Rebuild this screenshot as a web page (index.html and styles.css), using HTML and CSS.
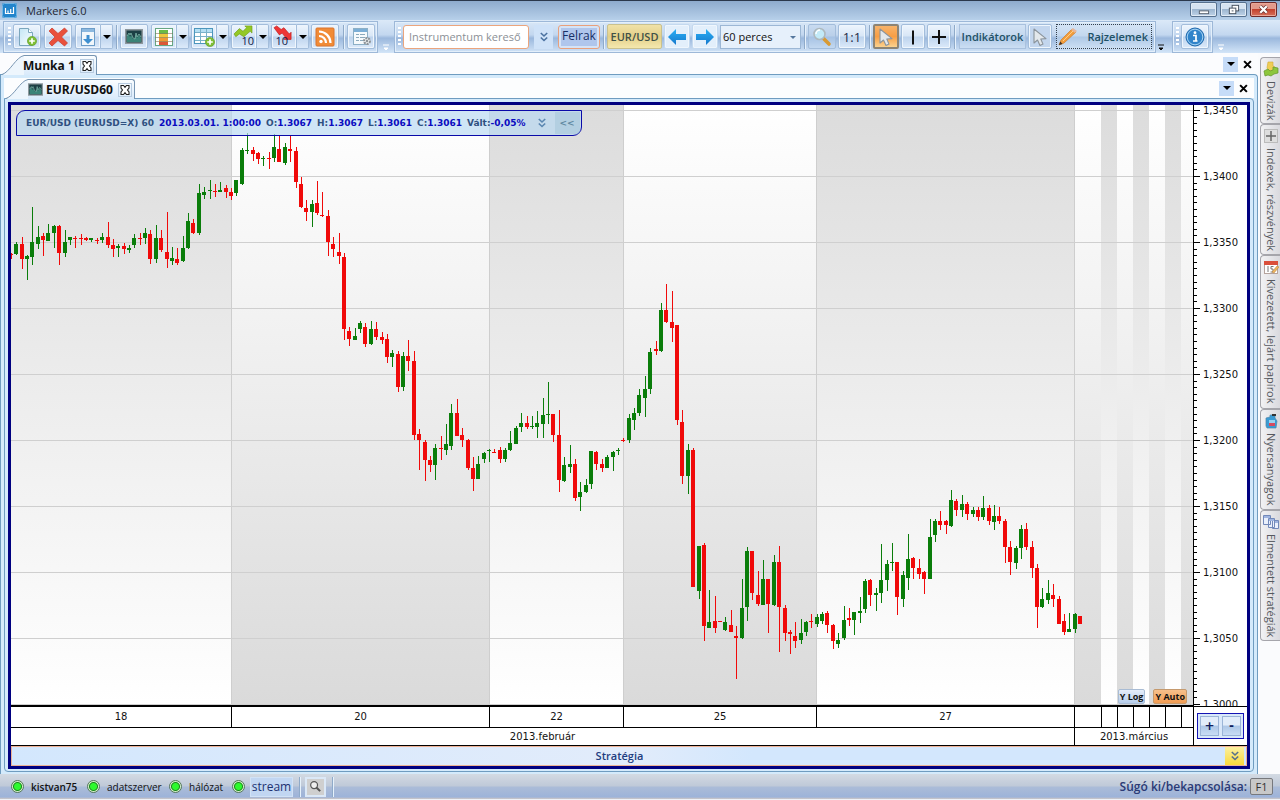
FILE: index.html
```html
<!DOCTYPE html>
<html lang="hu">
<head>
<meta charset="utf-8">
<title>Markers 6.0</title>
<link rel="stylesheet" href="styles.css">
</head>
<body>
<svg class="defs" aria-hidden="true">
  <defs>
    <linearGradient id="paper" x1="0" y1="0" x2="1" y2="1"><stop offset="0" stop-color="#c4e6f5"/><stop offset="1" stop-color="#fbfeff"/></linearGradient>
    <linearGradient id="arrowBlue" x1="0" y1="0" x2="0" y2="1"><stop offset="0" stop-color="#2ab0f5"/><stop offset="1" stop-color="#1678cc"/></linearGradient>
    <symbol id="plusBadge" viewBox="0 0 10 10"><circle cx="5" cy="5" r="4.6" fill="#7fbf35" stroke="#5f9a2c" stroke-width=".6"/><path d="M5 2.2v5.6M2.2 5h5.600" stroke="#fff" stroke-width="1.7"/></symbol>
    <symbol id="cursor" viewBox="0 0 16 18"><path d="M2 1v14l3.500-3 2.500 5.500 3-1.400L8.800 11l5.200-.4z" fill="#e3e8ec" stroke="#8b949c" stroke-width="1.1" stroke-linejoin="round"/></symbol>
    <symbol id="chev" viewBox="0 0 8 10"><path d="M.8 1L4 4l3.200-3M.8 5.500L4 8.500l3.200-3" fill="none" stroke="currentColor" stroke-width="1.6"/></symbol>
    <symbol id="monitor" viewBox="0 0 18 15"><path d="M0 0h18v15H0z" fill="#8d979c"/><path d="M1.500 1.500h15v12h-15z" fill="#1c3f44"/><path d="M2 13V7l2-2 1 3 1-2 2 4 2 0 1-5 1 4 2-3 2 3v4z" fill="#3b8377"/><path d="M2 7l2-3 1 2 1-2 2 5 2 1 1-6 1 4 2-3 2 3" fill="none" stroke="#8cc7b8" stroke-width=".7"/></symbol>
    <symbol id="closeTab" viewBox="0 0 12 12"><path d="M2 1.500h2.500L6 3.400 7.500 1.500H10v2.600L8.500 6 10 7.900v2.600H7.500L6 8.600 4.500 10.500H2V7.900L3.500 6 2 4.100z" fill="#fff" stroke="#222" stroke-width="1.1"/></symbol>
    <symbol id="overflow" viewBox="0 0 8 8"><path d="M1 1h6M2 4h4L4 6z" fill="currentColor" stroke="currentColor"/></symbol>
  </defs>
</svg>
<div class="app">
  <header class="titlebar">
    <svg class="logo" viewBox="0 0 15 15"><rect width="15" height="15" rx="2" fill="#2385cc"/><rect x=".5" y=".5" width="14" height="14" rx="2" fill="none" stroke="#72b7e5"/><path d="M3.500 5v5.500h8V4M6 10.500V7.500M8.700 10.500V6" fill="none" stroke="#fff" stroke-width="1.200"/></svg>
    <h1 class="app-name">Markers 6.0</h1>
    <div class="win-buttons">
      <button class="win-btn" aria-label="Kis méret"><svg viewBox="0 0 26 14"><rect x="8.500" y="8.500" width="10" height="3" fill="#fff" stroke="#555e6b"/></svg></button>
      <button class="win-btn" aria-label="Előző méret"><svg viewBox="0 0 26 14"><rect x="11.500" y="2.500" width="7" height="6" fill="#fff" stroke="#444e5b"/><rect x="8.500" y="5.500" width="7" height="6" fill="#fff" stroke="#444e5b"/><path d="M11 8.500h2" stroke="#444e5b"/></svg></button>
      <button class="win-btn win-close" aria-label="Bezárás"><svg viewBox="0 0 26 14"><path d="M9.500 3.500l7 7M16.500 3.500l-7 7" stroke="#633" stroke-width="4"/><path d="M9.500 3.500l7 7M16.500 3.500l-7 7" stroke="#fff" stroke-width="2.400"/></svg></button>
    </div>
  </header>

  <nav class="toolbar" aria-label="Eszköztár">
    <div class="group group-files">
      <span class="grip"></span>
      <button class="tool" aria-label="Új"><svg viewBox="0 0 22 20"><path d="M3.500 1.500h9l4 4v13h-13z" fill="url(#paper)" stroke="#7ba6bd"/><path d="M12.500 1.500v4h4" fill="#fff" stroke="#7ba6bd"/><use href="#plusBadge" x="11" y="9" width="10" height="10"/></svg></button>
      <button class="tool" aria-label="Törlés"><svg viewBox="0 0 22 20"><path d="M2 4l3-3 6 5.500L17.500 1l3 3-6 6 6 6-3 3-6.500-5.500L5 19l-3-3 6-6z" fill="#e9503c" stroke="#ca3929" stroke-width=".7"/></svg></button>
      <span class="split"><button class="tool" aria-label="Mentés"><svg viewBox="0 0 22 20"><rect x="4.500" y="1.500" width="13" height="17" fill="#f1f7fb" stroke="#6d9dc8"/><path d="M5 2h12v3H5z" fill="#8bb8df"/><path d="M9.500 8h3v4H16l-5 5-5-5h3.500z" fill="#3e8fd0"/></svg></button><button class="drop" aria-label="Mentés menü"></button></span>
      <span class="sep"></span>
      <button class="tool" aria-label="Grafikon"><svg viewBox="0 0 22 20"><use href="#monitor" x="2" y="2" width="18" height="15"/></svg></button>
      <span class="split"><button class="tool" aria-label="Árlista"><svg viewBox="0 0 22 20"><rect x="2.500" y="1.500" width="17" height="17" fill="#fff" stroke="#66a783"/><path d="M6 3h9v4H6z" fill="#6abb45"/><path d="M6 7h9v4H6z" fill="#f0c83c"/><path d="M6 11h9v4H6z" fill="#f09a35"/><path d="M6 15h9v3H6z" fill="#dc5737"/><path d="M2 6.500h18M2 10.500h18M2 14.500h18" stroke="#85755e" stroke-width=".6"/></svg></button><button class="drop" aria-label="Árlista menü"></button></span>
      <span class="split"><button class="tool" aria-label="Új táblázat"><svg viewBox="0 0 22 20"><rect x="1.500" y="1.500" width="18" height="15" fill="#fff" stroke="#4c96bc"/><path d="M2 2h17v3H2z" fill="#b4dff4"/><path d="M2 5.500h17M2 9.500h17M2 13.500h17M7.500 2v14M13.500 2v14" stroke="#79b1ca"/><use href="#plusBadge" x="12" y="10" width="10" height="10"/></svg></button><button class="drop" aria-label="Új táblázat menü"></button></span>
      <span class="split"><button class="tool tool-count" aria-label="Nyertesek 10"><svg viewBox="0 0 22 20"><path d="M1 10l6-6 4 3 4-4-2-2h8v8l-2-2-7 6-5-3-4 3z" fill="#94c825" stroke="#6e9b17" stroke-width=".7"/></svg><span>10</span></button><button class="drop" aria-label="Nyertesek menü"></button></span>
      <span class="split"><button class="tool tool-count lose" aria-label="Vesztesek 10"><svg viewBox="0 0 22 20"><path d="M1 3l3-2 5 4 3-2 6 7 2-2v8h-8l2-2-4-5-3 2z" fill="#ee3636" stroke="#bf1717" stroke-width=".7"/></svg><span>10</span></button><button class="drop" aria-label="Vesztesek menü"></button></span>
      <button class="tool" aria-label="Hírek"><svg viewBox="0 0 22 20"><rect x="2" y="1" width="18" height="18" rx="1" fill="#f18b36" stroke="#dc752c"/><circle cx="7" cy="14.500" r="1.700" fill="#fff"/><path d="M5 9a7 7 0 0 1 7 7M5 4.500A11.500 11.500 0 0 1 16.500 16" fill="none" stroke="#fff" stroke-width="2.200"/></svg></button>
      <span class="sep"></span>
      <button class="tool" aria-label="Beállítások"><svg viewBox="0 0 22 20"><rect x="3.500" y="1.500" width="14" height="16" fill="#f6fafc" stroke="#8cafc6"/><path d="M4 2h13v3H4z" fill="#7baed6"/><path d="M6 7.500h3m1 0h5M6 10.500h3m1 0h5M6 13.500h3m1 0h3" stroke="#8caabd"/><circle cx="17" cy="14" r="3" fill="#e7e9ea" stroke="#8d9398" stroke-width="2" stroke-dasharray="2 1"/><circle cx="17" cy="14" r="1.200" fill="#8d9398"/></svg></button>
    </div>
    <svg class="more"><use href="#overflow"/></svg>
    <div class="group group-main">
      <span class="grip"></span>
      <input class="search" type="text" placeholder="Instrumentum kereső" aria-label="Instrumentum kereső">
      <button class="expand" aria-label="Lenyit"><svg><use href="#chev"/></svg></button>
      <button class="add"><span>Felrak</span></button>
      <span class="sep"></span>
      <button class="pair">EUR/USD</button>
      <button class="tool tool-arrow" aria-label="Előző"><svg viewBox="0 0 22 20"><path d="M2 10l8-8v5h10v6H10v5z" fill="url(#arrowBlue)"/></svg></button>
      <button class="tool tool-arrow" aria-label="Következő"><svg viewBox="0 0 22 20"><path d="M20 10l-8-8v5H2v6h10v5z" fill="url(#arrowBlue)"/></svg></button>
      <span class="combo"><select aria-label="Időtáv"><option>60 perces</option></select></span>
      <span class="sep"></span>
      <button class="tool tool-zoom" aria-label="Nagyítás"><svg viewBox="0 0 22 20"><path d="M12 11l6 6" stroke="#d89a33" stroke-width="3.600" stroke-linecap="round"/><circle cx="8.500" cy="7" r="5.500" fill="#c2eaf8" stroke="#aeb8bd" stroke-width="1.600"/><path d="M5 7a4 4 0 0 1 4-4" stroke="#fff" stroke-width="1.500" fill="none"/></svg></button>
      <button class="tool tool-ratio">1:1</button>
      <span class="sep"></span>
      <button class="tool tool-on" aria-label="Mutató"><svg viewBox="0 0 22 20"><use href="#cursor" x="3" y="1" width="16" height="18"/></svg></button>
      <button class="tool tool-mark" aria-label="Függőleges vonal"><svg viewBox="0 0 22 20"><path d="M11 3.500v14" stroke="#111" stroke-width="2"/></svg></button>
      <button class="tool tool-mark" aria-label="Kereszt"><svg viewBox="0 0 22 20"><path d="M11 3v14M4 10h14" stroke="#111" stroke-width="2"/></svg></button>
      <span class="sep"></span>
      <button class="tool-text tool-ind">Indikátorok</button>
      <button class="tool tool-mark tool-pick" aria-label="Kijelölés"><svg viewBox="0 0 22 20"><use href="#cursor" x="3" y="1" width="16" height="18"/></svg></button>
      <button class="tool-text tool-draw"><svg viewBox="0 0 22 20"><path d="M2 18l2-5L15 2l4 3L7 16z" fill="#f29d3d" stroke="#cf7d26" stroke-width=".7"/><path d="M14 2.500L16 1l4 3-2 2z" fill="#e6b69c"/><path d="M2 18l1.300-3.500L5.500 17z" fill="#443428"/><path d="M6 14L16 4" stroke="#ffd086"/></svg>Rajzelemek</button>
    </div>
    <svg class="more more-dark"><use href="#overflow"/></svg>
    <div class="group group-info">
      <span class="grip"></span>
      <button class="tool" aria-label="Információ"><svg viewBox="0 0 22 20"><circle cx="11" cy="10" r="9" fill="#2f83ca" stroke="#246cae"/><circle cx="11" cy="10" r="7.800" fill="none" stroke="#a5d2f3"/><circle cx="11" cy="5.700" r="1.400" fill="#fff"/><path d="M9 8.500h3V14h1.500M9 14h4" fill="none" stroke="#fff" stroke-width="1.700"/></svg></button>
    </div>
    <svg class="more"><use href="#overflow"/></svg>
  </nav>

  <main class="workspace">
    <section class="desk">
      <div class="tabs tabs-outer">
        <div class="tab">
          <svg class="slant" viewBox="0 0 22 20" preserveAspectRatio="none"><path d="M0 20C8 17 14 3 22 .5V20z" fill="#eef6fd"/><path d="M0 19.500C8 17 14 2 22 .5" fill="none" stroke="#7795b2"/></svg>
          <div class="tab-body"><span>Munka 1</span><button class="tab-close" aria-label="Bezárás"><svg><use href="#closeTab"/></svg></button></div>
        </div>
        <div class="tab-tools"><button class="tab-list" aria-label="Lapok"></button><button class="tab-x" aria-label="Bezárás"><svg viewBox="0 0 8 8"><path d="M1 1l6 6M7 1L1 7" stroke="#000" stroke-width="1.800"/></svg></button></div>
      </div>
      <div class="frame">
        <div class="tabs tabs-inner">
          <div class="tab">
            <svg class="slant" viewBox="0 0 22 20" preserveAspectRatio="none"><path d="M0 20C8 17 14 3 22 .5V20z" fill="#eef6fd"/><path d="M0 19.500C8 17 14 2 22 .5" fill="none" stroke="#7795b2"/></svg>
            <div class="tab-body"><svg class="tab-icon"><use href="#monitor"/></svg><span>EUR/USD60</span><button class="tab-close" aria-label="Bezárás"><svg><use href="#closeTab"/></svg></button></div>
          </div>
          <div class="tab-tools"><button class="tab-list" aria-label="Lapok"></button><button class="tab-x" aria-label="Bezárás"><svg viewBox="0 0 8 8"><path d="M1 1l6 6M7 1L1 7" stroke="#000" stroke-width="1.800"/></svg></button></div>
        </div>
        <div class="frame-inner">
          <div class="chart">
            <div class="plot">
              <svg id="candles" viewBox="11 105 1182 600" preserveAspectRatio="none" role="img" aria-label="EUR/USD 60 perces gyertyadiagram"></svg>
              <div class="quote">
                <span class="lbl">EUR/USD (EURUSD=X) 60</span><b>2013.03.01. 1:00:00</b><span class="lbl">O:<b>1.3067</b></span><span class="lbl">H:<b>1.3067</b></span><span class="lbl">L:<b>1.3061</b></span><span class="lbl">C:<b>1.3061</b></span><span class="lbl">Vált:<b>-0,05%</b></span>
                <button class="quote-more" aria-label="Lenyit"><svg><use href="#chev"/></svg></button><button class="quote-fold">&lt;&lt;</button>
              </div>
              <div class="scale-buttons"><button class="scale-btn">Y Log</button><button class="scale-btn scale-on">Y Auto</button></div>
            </div>
            <div class="prices">
              <svg id="ticks" viewBox="0 105 8 600" preserveAspectRatio="none" aria-hidden="true"></svg>
              <ol class="price-list"><li>1,3450</li><li>1,3400</li><li>1,3350</li><li>1,3300</li><li>1,3250</li><li>1,3200</li><li>1,3150</li><li>1,3100</li><li>1,3050</li><li>1,3000</li></ol>
            </div>
            <div class="dates">
              <div class="days"><span>18</span><span>20</span><span>22</span><span>25</span><span>27</span><span></span><span></span><span></span><span></span><span></span><span></span><span></span></div>
              <div class="months"><span>2013.február</span><span>2013.március</span></div>
            </div>
            <div class="corner"><div class="zoomers"><button>+</button><button>-</button></div></div>
            <div class="strategy"><span>Stratégia</span><button aria-label="Stratégia lenyitása"><svg><use href="#chev"/></svg></button></div>
          </div>
        </div>
      </div>
    </section>
    <aside class="side">
      <button class="side-tab side-fx"><svg viewBox="0 0 16 16"><path d="M5 1h5v4l2 1v4H6L4 7z" fill="#efcd55" stroke="#d0aa32" stroke-width=".6"/><path d="M1 10l4-2 2 2 3-1V6l5 1v5l-4 1-3 2-3-1-3 1z" fill="#8dc63c" stroke="#62972b" stroke-width=".7"/></svg>Devizák</button>
      <button class="side-tab side-idx"><svg viewBox="0 0 16 16"><rect x="1.500" y="1.500" width="13" height="13" fill="#dedede" stroke="#bbb"/><path d="M8 3v10M3 8h10" stroke="#666" stroke-width="1.500"/></svg>Indexek, részvények</button>
      <button class="side-tab side-exp"><svg viewBox="0 0 16 16"><rect x="1.500" y="2.500" width="13" height="12" fill="#fff" stroke="#b5a39d"/><path d="M1 2h14v4H1z" fill="#da4f3b"/><path d="M5 7v6M10.500 7.500H8V10h2v3H7.500" stroke="#777" fill="none"/><path d="M9 13l5-6 2 1-5 6z" fill="#eeb65f" stroke="#b67d36" stroke-width=".5"/></svg>Kivezetett, lejárt papírok</button>
      <button class="side-tab side-raw"><svg viewBox="0 0 16 16"><path d="M3 5l4-1V2h5v3l2 3-1 7H4L3 13z" fill="#3a9bd4" stroke="#4d87ab" stroke-width=".7"/><path d="M9 1h4v2H9z" fill="#333"/><path d="M6 7h6v6H6z" fill="#9bd2ef"/><path d="M6 10h6v3H6z" fill="#d64b60"/></svg>Nyersanyagok</button>
      <button class="side-tab side-str"><svg viewBox="0 0 16 16"><path d="M.5 1.500h7v9h-7zM9.500 6.500h6v8h-6zM5.500 4.500h6v9h-6z" fill="#eaf0fc" stroke="#7289ba"/><path d="M1 2h6v2H1zM6 5h5v2H6zM12 7h3v2h-3z" fill="#9fb4e0"/></svg>Elmentett stratégiák</button>
    </aside>
  </main>

  <footer class="status">
    <span class="lamp lamp-user"><i></i>kistvan75</span>
    <span class="lamp lamp-data"><i></i>adatszerver</span>
    <span class="lamp lamp-net"><i></i>hálózat</span>
    <span class="lamp lamp-stream"><i></i><button>stream</button></span>
    <span class="sep"></span>
    <button class="find" aria-label="Keresés"><svg viewBox="0 0 14 14"><path d="M8 8l4 4" stroke="#555" stroke-width="2.200"/><circle cx="5.500" cy="5.500" r="3.700" fill="#eee" stroke="#555" stroke-width="1.300"/></svg></button>
    <span class="sep"></span>
    <span class="help">Súgó ki/bekapcsolása:</span><button class="key">F1</button>
  </footer>
</div>
<script src="chart.js"></script>
</body>
</html>
```
FILE: styles.css
```css
* { box-sizing: border-box; }
body { margin: 0; font: 12px/16px "Open Sans", "Noto Sans", sans-serif; color: #111; }
button, input, select { font: inherit; color: inherit; margin: 0; padding: 0; border: 0; background: none; }
.defs { position: absolute; width: 0; height: 0; }
.app { display: flex; flex-direction: column; min-height: 100vh; background: #fbfcfe; }

/* Title bar */
.titlebar { display: flex; align-items: center; gap: 9px; height: 20px; padding: 0 3px 0 2px; border-top: 1px solid #2b384c; background: linear-gradient(#8eabcd, #b7d0ea); }
.logo { width: 15px; height: 15px; }
.app-name { flex: 1; margin: 0; font-size: 11px; font-weight: 400; color: #1d2530; }
.win-buttons { display: flex; gap: 3px; align-self: flex-start; padding-top: 1px; }
.win-btn { width: 27px; height: 15px; border: 1px solid #56708e; border-radius: 2px; background: linear-gradient(#d6e3f1 45%, #9db6d0 50%, #bfd3e8); box-shadow: inset 0 0 0 1px #e1ebf5; }
.win-btn svg { display: block; width: 25px; height: 13px; }
.win-close { border-color: #6e2a2a; background: linear-gradient(#e39a8b 45%, #c4422e 50%, #d6705c); box-shadow: inset 0 0 0 1px #eaa798; }

/* Toolbar */
.toolbar { display: flex; align-items: center; height: 33px; padding: 0 3px; background: linear-gradient(#dbe9f8, #c3d7ef 45%, #9bb8dd 55%, #d3e5f8); }
.toolbar > *, .group > * { flex: none; }
.group { display: flex; align-items: center; gap: 2px; height: 32px; padding: 0 3px; border: 1px solid #9db8d8; box-shadow: inset 0 0 0 1px #e3effb; }
.group-files { padding: 0 1px 0 4px; }
.group-files > .tool { margin-right: 1px; }
.grip { width: 3px; height: 20px; background: repeating-linear-gradient(#fff 0 2px, transparent 2px 4px); }
.tool { display: flex; align-items: center; justify-content: center; position: relative; width: 28px; height: 25px; border: 1px solid #a3bddb; border-radius: 2px; background: linear-gradient(#eef5fd, #d8e6f6 48%, #bdd3ed 52%, #dceafa); box-shadow: inset 0 0 0 1px #eff6fd; }
.tool svg { flex: none; width: 22px; height: 20px; }
.split { display: flex; }
.split .tool { width: 26px; border-radius: 2px 0 0 2px; }
.split .drop { width: 12px; height: 25px; border: 1px solid #a3bddb; border-left: 0; border-radius: 0 2px 2px 0; background: linear-gradient(#eef5fd, #d8e6f6 48%, #bdd3ed 52%, #dceafa); display: flex; align-items: center; justify-content: center; }
.drop::before, .tab-list::before { content: ""; border: 4px solid transparent; border-top-color: #000; border-bottom: 0; }
.tool-count svg { position: absolute; left: 1px; top: 0; width: 20px; height: 18px; }
.tool-count span { position: absolute; right: 2px; bottom: 0; font-size: 11px; line-height: 14px; color: #101848; }
.tool-count.lose span { right: 8px; }
.sep { width: 1px; height: 24px; margin: 0 1px; background: #8faac9; box-shadow: 1px 0 #e6f1fb; }
.more { width: 8px; height: 8px; margin: 22px 4px 0; color: #fff; }
.more-dark { margin: 22px 7px 0 1px; color: #111; }
.search { width: 126px; height: 24px; padding: 0 5px; border: 1px solid #eba57d; border-radius: 3px; background: #fff; font-size: 11px; }
.search::placeholder { color: #8b9096; opacity: 1; }
.expand { display: grid; place-items: center; width: 19px; height: 24px; background: #cfe2f8; color: #4b72a0; margin: 0 3px; }
.expand svg, .quote-more svg, .strategy svg { width: 8px; height: 10px; }
.add { width: 42px; height: 24px; padding: 2px; border: 1px solid #e8a07c; border-radius: 3px; background: #d5e3f6; color: #182f66; }
.add span { display: block; height: 18px; background: #b0c6ec; }
.pair { width: 55px; height: 25px; border: 1px solid #c9c18e; border-radius: 2px; background: linear-gradient(#f0e2a8, #e3cf88 50%, #f4e8ae); font-weight: 600; font-size: 11px; color: #3f5148; white-space: nowrap; }
.tool-arrow { width: 26px; border-color: #c4d9ef; background: #e3effb; }
.combo { position: relative; width: 81px; height: 24px; border: 1px solid #9cb7d5; background: #e6f0fb; }
.combo select { display: block; width: 100%; height: 22px; padding-left: 2px; appearance: none; font-size: 11px; }
.combo::after { content: ""; position: absolute; right: 4px; top: 10px; border: 3px solid transparent; border-top-color: #56789e; border-bottom: 0; pointer-events: none; }
.tool-zoom { background: linear-gradient(#c9dbf0, #b9cfe9 48%, #a6c2e4 52%, #c2d8f0); box-shadow: none; }
.tool-ratio { font-size: 13px; color: #1e2c48; }
.tool-on { width: 26px; border: 2px solid #8c8475; background: linear-gradient(#f7b36a, #f79e45 50%, #fbd28f); box-shadow: none; }
.tool-mark { width: 24px; }
.tool-pick { background: #c3d6ee; }
.tool-text { display: flex; align-items: center; justify-content: center; height: 25px; padding: 0; border: 1px solid #a9c1de; background: linear-gradient(#d3e3f5, #c3d7ee 48%, #aec8e6 52%, #cbdef3); font-size: 11px; font-weight: 600; color: #1e5166; white-space: nowrap; }
.tool-ind { width: 67px; margin-left: 1px; }
.tool-draw { width: 96px; margin-left: 2px; justify-content: space-between; padding-right: 3px; border: 1px dotted #33404d; }
.tool-draw svg { width: 22px; height: 20px; }

/* Workspace and tabs */
.workspace { display: flex; flex: 1; min-height: 0; }
.desk { display: flex; flex-direction: column; flex: 1; min-width: 0; }
.tabs { display: flex; align-items: flex-end; justify-content: space-between; }
.tabs-outer { height: 21px; padding: 0 6px 0 2px; }
.tabs-inner { height: 20px; padding: 0 6px 0 2px; background: #fcfdfe; }
.tab { display: flex; height: 20px; margin-bottom: -1px; position: relative; z-index: 1; }
.slant { width: 22px; height: 20px; }
.tab-body { display: flex; align-items: center; height: 20px; gap: 5px; padding-right: 2px; border-top: 1px solid #7795b2; border-right: 1px solid #7795b2; border-radius: 0 3px 0 0; background: linear-gradient(#fafdff, #d9eafb); font-weight: 700; }
.tab-body span { margin-left: -1px; }
.tab-icon { width: 15px; height: 13px; margin-right: -1px; }
.tab-close { width: 14px; height: 14px; border: 1px solid #b7cbe0; display: grid; place-items: center; }
.tab-close svg { width: 12px; height: 12px; }
.tab-tools { display: flex; align-items: center; gap: 4px; height: 20px; }
.tab-list { display: grid; place-items: center; width: 15px; height: 15px; background: #c6dcf8; }
.tab-x { display: grid; place-items: center; width: 10px; height: 14px; }
.tab-x svg { width: 9px; height: 9px; }
.frame { display: flex; flex-direction: column; flex: 1; padding: 3px 3px 2px; border: 1px solid #6f9cc0; border-bottom: 0; border-radius: 0 4px 0 0; background: #d4eafb; }
.frame-inner { display: flex; flex: 1; padding: 3px 3px 2px; border: 1px solid #6f9cc0; border-radius: 0 4px 4px 4px; background: #d4eafb; }

/* Chart */
.chart { display: grid; flex: 1; grid-template: minmax(0, 1fr) 41px 20px / minmax(0, 1fr) 54px; border: 3px solid #000080; background: #fff; font: 10px/14px "DejaVu Sans", sans-serif; }
.plot { position: relative; min-height: 300px; }
.plot > svg { position: absolute; inset: 0; width: 100%; height: 100%; }
.quote { position: absolute; left: 5px; top: 5px; display: flex; align-items: center; gap: 5px; height: 26px; padding: 0 1px 0 9px; border: 1px solid #0a0aa8; border-radius: 9px 0 9px 0; background: rgba(184, 216, 242, .68); font-weight: 700; font-size: 9px; white-space: nowrap; color: #2f5080; }
.quote b { color: #0a0ac0; }
.quote-more { display: grid; place-items: center; width: 20px; height: 20px; margin-left: 1px; color: #5a86b0; }
.quote-fold { width: 25px; height: 22px; margin-left: -2px; background: rgba(150, 185, 205, .35); color: #5f88a0; }
.scale-buttons { position: absolute; right: 6px; bottom: 1px; display: flex; gap: 8px; }
.scale-btn { height: 15px; padding: 0 1px; border: 1px solid #a9bcd4; border-radius: 2px; background: linear-gradient(#e5eefa, #b6cdeb); font: 700 9px/13px "Open Sans", sans-serif; }
.scale-on { border-color: #c59a6e; background: linear-gradient(#f7c08c, #f19c52); }
.prices { position: relative; overflow: hidden; border-left: 1px solid #000; border-bottom: 1px solid #000; margin-bottom: -2px; }
#ticks { position: absolute; left: 0; top: 0; width: 8px; height: calc(100% - 1px); }
.price-list { display: flex; flex-direction: column; height: calc(100% - 1px); margin: -27px 0 0; padding: 0 0 0 9px; list-style: none; }
.price-list li { display: flex; align-items: center; flex: 0 0 11%; }
.dates { border-top: 2px solid #000; border-bottom: 1px solid #000; text-align: center; }
.days { display: grid; grid-template-columns: 221fr 258fr 134fr 193fr 258fr 27fr 16fr 16fr 16fr 16fr 16fr 11fr; height: 21px; border-bottom: 1px solid #000; }
.months { display: grid; grid-template-columns: 1064fr 118fr; height: 17px; }
.days span, .months span { padding-top: 3px; border-right: 1px solid #000; }
.days span:last-child, .months span:last-child { border-right: 0; }
.months span { padding-top: 2px; }
.corner { border-left: 1px solid #000; border-bottom: 1px solid #000; padding: 8px 3px 0 3px; }
.zoomers { display: flex; gap: 3px; padding: 2px; border: 1px solid #1414b4; background: #d9e8fa; }
.zoomers button { flex: 1; height: 20px; border: 1px solid #9bb5d7; background: linear-gradient(#e2edfa 45%, #adc7e7 50%, #c9ddf4); font: 700 12px/16px "DejaVu Sans", sans-serif; color: #10205c; }
.strategy { grid-column: 1 / -1; display: flex; align-items: center; border: 1px solid #eeb194; background: linear-gradient(90deg, #d3e7fd, #e2ecfb 50%, #d3e7fd 60%); color: #1e3d80; font: 600 11px/16px "Open Sans", sans-serif; }
.strategy span { flex: 1; padding-left: 2px; text-align: center; }
.strategy button { display: grid; place-items: center; width: 19px; height: 18px; margin-right: 2px; background: linear-gradient(#fbf0a0, #f9d83c); color: #57708a; }

/* Side tabs */
.side { display: flex; flex-direction: column; width: 22px; padding: 4px 0 0 2px; background: #fafbfd; }
.side-tab { display: flex; align-items: center; gap: 4px; width: 20px; padding: 3px 0; writing-mode: vertical-rl; border: 1px solid #a5a5ab; border-right: 0; border-radius: 4px 0 0 4px; background: linear-gradient(90deg, #f2f2f4, #d9d9de); font-size: 11px; color: #55585e; white-space: nowrap; }
.side-tab svg { flex: none; width: 16px; height: 16px; }
.side-fx { height: 67px; }
.side-idx { height: 131px; }
.side-exp { height: 154px; }
.side-raw { height: 101px; }
.side-str { height: 131px; }

/* Status bar */
.status { display: flex; align-items: center; height: 26px; padding: 0 7px 0 11px; border-bottom: 1px solid #eef1f6; background: linear-gradient(#d3dae3, #bfc9d8 48%, #abbcd8 52%, #9db3d9 92%, #cfc8c4); font-size: 10px; }
.lamp { display: flex; align-items: center; gap: 7px; }
.lamp i { width: 13px; height: 13px; border: 1px solid #55775a; border-radius: 50%; background: radial-gradient(circle, #2dfa2d 0 3px, #1a8a1a 4px, #d1f0c9 5px); }
.lamp-user { width: 76px; font-weight: 600; }
.lamp-data { width: 82px; }
.lamp-net { width: 63px; }
.lamp-stream { gap: 5px; }
.lamp-stream button { width: 43px; height: 20px; border: 1px solid #d1e2f6; background: #c1d6f2; font-size: 12px; color: #1b3170; }
.status .sep { height: 20px; margin: 0 5px 0 6px; }
.find { display: grid; place-items: center; width: 21px; height: 20px; border: 2px solid #dbe8f7; background: #cfcfcf; }
.find svg { width: 13px; height: 13px; }
.help { margin-left: auto; margin-right: 3px; font-size: 12px; font-weight: 600; color: #2b3a75; }
.key { width: 23px; height: 17px; border: 1px solid #77797d; border-radius: 2px; background: #c8c8c8; font-size: 11px; line-height: 14px; color: #333; }
```
FILE: chart.js
```js
const NS = 'http://www.w3.org/2000/svg';
const svg = document.getElementById('candles');

function add(parent, name, attrs) {
  const el = document.createElementNS(NS, name);
  for (const key in attrs) el.setAttribute(key, attrs[key]);
  parent.appendChild(el);
  return el;
}

function gradient(id, from, to) {
  const g = add(svg, 'linearGradient', { id, x1: 0, y1: 0, x2: 0, y2: 1 });
  add(g, 'stop', { offset: 0, 'stop-color': from });
  add(g, 'stop', { offset: 1, 'stop-color': to });
}
gradient('fadeOut', '#dcdcdc', '#ffffff');
gradient('fadeIn', '#ffffff', '#dadada');

// Session bands alternate between the two gradients.
const edges = [11, 231, 489, 623, 816, 1074, 1101, 1117, 1133, 1149, 1165, 1181, 1193];
for (let i = 0; i < edges.length - 1; i++) {
  add(svg, 'rect', { x: edges[i], y: 105, width: edges[i + 1] - edges[i], height: 600, fill: i % 2 ? 'url(#fadeIn)' : 'url(#fadeOut)' });
}
for (const x of edges.slice(1, 6)) add(svg, 'rect', { x, y: 105, width: 1, height: 600, fill: '#cecece' });
for (let y = 110; y < 705; y += 66) add(svg, 'rect', { x: 11, y, width: 1182, height: 1, fill: '#cfcfcf' });

// Each candle: direction, high, body top, body bottom, low.
const candles = `
r253,254,255,259 g242,244,254,255 r237,244,259,269 g255,256,259,280 g207,242,257,265 g226,237,244,249 r233,236,240,256 g224,233,241,241 g225,226,233,248 r225,226,253,265
g230,242,253,257 g237,237,240,245 r236,238,239,248 r234,238,239,245 r237,238,240,241 g238,238,240,242 r238,240,241,244 g233,237,240,243 r222,237,245,248 r239,245,249,257
g244,246,248,257 r243,246,249,254 g245,248,250,253 g234,238,245,248 r233,238,239,245 g228,233,238,244 r230,234,259,264 g225,238,259,263 r230,238,250,252 r212,252,259,268
g247,258,261,265 r248,259,263,265 g236,248,261,262 g213,221,248,249 r219,223,233,234 g184,193,233,235 g187,192,195,199 g180,190,191,199 r184,191,192,197 g182,190,192,192
r185,188,192,198 r188,192,196,200 g180,180,193,196 g148,150,184,185 g133,150,151,154 r147,150,154,161 r152,153,159,164 g156,158,159,166 r152,158,159,169 g134,147,158,162
r135,149,162,162 g143,147,163,165 r135,149,151,162 r147,151,182,188 r177,184,207,208 r200,208,212,221 g200,204,212,227 r181,203,213,215 r192,215,216,217 r210,216,242,256
r237,244,249,257 r233,252,256,264 r253,257,329,340 r327,331,339,346 g328,336,340,340 g321,323,329,333 r323,327,344,347 g321,329,344,345 r322,329,337,340 r332,337,340,344
r334,339,357,363 g350,353,357,367 r351,354,387,392 g352,356,387,391 r340,356,361,371 r351,361,435,440 r429,434,440,470 r440,442,460,481 r456,460,465,472 g444,448,465,480
r436,448,449,460 g424,444,450,455 g404,413,446,450 r399,413,436,436 r428,435,440,447 r439,440,468,470 r457,468,479,491 g456,464,479,479 g452,453,459,463 g449,450,451,462
r449,452,453,453 r447,450,459,463 g448,450,459,462 g431,443,450,451 g426,428,444,444 g413,423,427,432 r416,423,427,429 g416,426,427,429 g411,423,427,438 g398,415,424,438
g382,414,415,424 r414,414,435,442 r410,435,480,492 g457,465,481,482 g445,464,467,473 r459,464,498,501 g482,492,497,511 g479,485,492,493 g451,451,484,489 r451,452,464,470
r459,464,468,472 g455,457,468,468 g451,452,457,471 g448,450,451,455 r438,440,441,442 g414,418,440,443 g408,413,420,430 g389,395,413,416 g376,389,398,417 g348,352,389,394
r341,349,351,355 g303,310,351,352 r284,310,322,323 r291,322,328,342 r325,325,420,425 r410,422,476,484 g444,450,476,494 r448,450,587,587 g546,546,591,599 r543,545,626,641
g590,622,628,628 r596,621,628,633 r621,621,622,622 g617,622,630,631 r610,625,632,632 r626,636,638,679 g579,608,638,639 g547,551,607,621 r551,551,593,600 r571,595,604,606
g560,579,605,605 r579,579,604,633 g555,562,605,606 r546,562,607,652 r605,608,633,641 r630,632,634,654 r622,636,641,648 g619,633,640,644 g621,622,632,636 r614,621,622,628
g614,617,624,627 g612,614,621,624 r611,613,625,633 r624,625,641,649 g633,640,644,648 g606,620,638,640 r608,618,620,626 g612,612,620,635 g597,611,613,623 g579,581,609,613
r579,580,595,606 g588,593,595,611 g544,580,593,603 g560,564,580,591 g543,562,563,571 r562,562,597,615 g571,575,599,607 g534,559,578,590 r557,558,568,579 r559,568,574,579
r571,572,579,594 g519,537,579,579 g519,521,535,542 r511,521,525,530 r520,521,525,534 g490,500,526,527 r499,501,510,516 g495,504,510,517 r502,504,514,520 g507,510,514,517
r507,510,517,521 g496,508,517,520 r505,508,521,525 g505,516,522,530 r507,516,521,524 r519,521,547,563 r541,547,562,575 g546,548,563,569 g525,529,548,559 r523,529,547,550
r541,547,568,578 r564,568,607,628 g588,599,607,608 g580,593,600,604 r584,595,599,607 r596,599,624,624 r614,621,632,635 g613,629,632,632 g613,614,629,633 r616,616,624,624`.trim().split(/\s+/);

candles.forEach((item, i) => {
  const [high, top, bottom, low] = item.slice(1).split(',').map(Number);
  const fill = item[0] === 'g' ? '#0a7d0a' : '#f00a0a';
  const x = Math.floor(11.3 + i * 5.373);
  add(svg, 'rect', { x, y: high, width: 1, height: Math.max(1, low - high), fill });
  add(svg, 'rect', { x: x - 2, y: top, width: 4, height: Math.max(1, bottom - top), fill });
});

const ticks = document.getElementById('ticks');
for (let i = 0; i <= 90; i++) {
  add(ticks, 'rect', { x: 0, y: Math.round(110 + i * 6.6), width: i % 10 ? 3 : 6, height: 1, fill: '#000' });
}
```
